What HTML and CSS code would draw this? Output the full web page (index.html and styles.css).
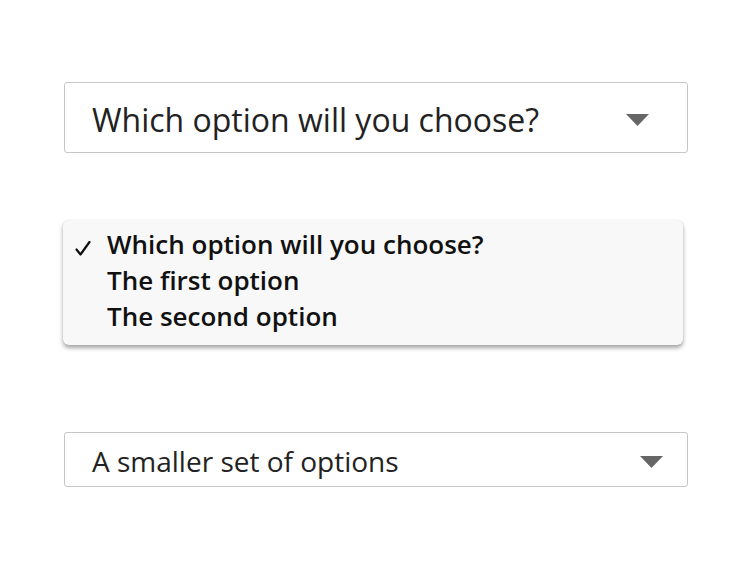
FILE: index.html
```html
<!DOCTYPE html>
<html lang="en">
<head>
<meta charset="utf-8">
<title>Select options</title>
<link rel="stylesheet" href="styles.css">
</head>
<body>
<main class="page">
  <div class="select select-large">
    <span class="select-label">Which option will you choose?</span>
    <svg class="caret" width="23" height="12" viewBox="0 0 23 12"><path d="M0 0H23L11.5 12Z" fill="#666"/></svg>
  </div>

  <ul class="menu">
    <li class="menu-item is-checked"><span class="check"><svg width="16" height="15" viewBox="0 0 16 15"><path d="M1.5 8.5L5.5 13.5L14.5 1" fill="none" stroke="#111" stroke-width="2.2" stroke-linecap="round" stroke-linejoin="round"/></svg></span>Which option will you choose?</li>
    <li class="menu-item"><span class="check"></span>The first option</li>
    <li class="menu-item"><span class="check"></span>The second option</li>
  </ul>

  <div class="select select-small">
    <span class="select-label">A smaller set of options</span>
    <svg class="caret" width="23" height="12" viewBox="0 0 23 12"><path d="M0 0H23L11.5 12Z" fill="#666"/></svg>
  </div>
</main>
</body>
</html>
```
FILE: styles.css
```css
html, body {
  margin: 0;
  background: #fff;
}

.page {
  display: flex;
  flex-direction: column;
  padding: 82px 0 0 64px;
  width: 624px;
  font-family: "Open Sans", sans-serif;
  color: #222;
}

.select {
  box-sizing: border-box;
  display: flex;
  align-items: center;
  justify-content: space-between;
  border: 1px solid #c6c6c6;
  border-radius: 3px;
  background: #fff;
  padding-left: 27px;
  line-height: 1.36;
}

.select-large {
  height: 71px;
  font-size: 32px;
  padding-top: 5px;
  padding-right: 38px;
}

.select-small {
  height: 55px;
  font-size: 28px;
  padding-top: 3px;
  padding-right: 24px;
  margin-top: 87px;
}

.select-small .caret {
  margin-top: 2px;
}

.menu {
  list-style: none;
  margin: 67px 0 0 -1px;
  padding: 6px 0 11px;
  width: 620px;
  height: 125px;
  box-sizing: border-box;
  background: #f8f8f8;
  border-radius: 6px;
  box-shadow: 0 3px 4px rgba(0, 0, 0, 0.35), 0 0 1px rgba(0, 0, 0, 0.15);
  font-size: 26px;
  font-weight: 600;
  line-height: 36px;
  color: #111;
}

.menu-item {
  display: flex;
  height: 36px;
}

.check {
  display: flex;
  align-items: flex-start;
  width: 44px;
  padding: 15px 0 0 12px;
  box-sizing: border-box;
}
```
